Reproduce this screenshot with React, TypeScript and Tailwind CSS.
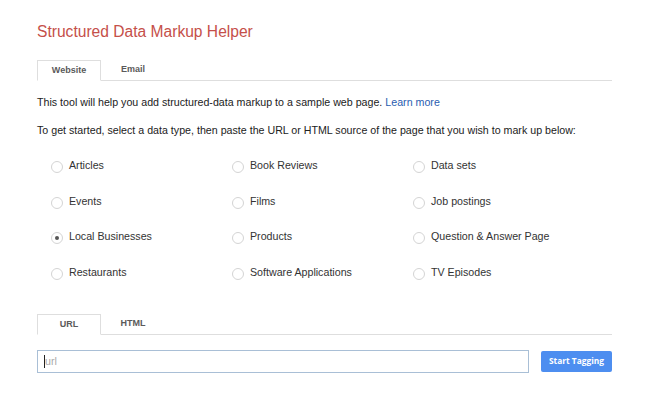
import React from "react";

const types = [
  ["Articles", "Book Reviews", "Data sets"],
  ["Events", "Films", "Job postings"],
  ["Local Businesses", "Products", "Question & Answer Page"],
  ["Restaurants", "Software Applications", "TV Episodes"],
];

function Radio({ checked }: { checked?: boolean }) {
  return (
    <span className="w-[12px] h-[12px] rounded-full border border-[#d4d4d4] bg-white flex items-center justify-center shrink-0 mt-[3px]">
      {checked && <span className="w-[4px] h-[4px] rounded-full bg-[#555]" />}
    </span>
  );
}

function Tabs({ a, b }: { a: string; b: string }) {
  return (
    <div className="flex h-[21px] border-b border-[#dedede] w-[575px]">
      <div className="w-[64px] h-[21px] border border-[#dedede] border-b-white bg-white flex items-center justify-center text-[9px] font-bold text-[#5a5a5a]">
        {a}
      </div>
      <div className="w-[64px] h-[20px] flex items-center justify-center text-[9px] font-bold text-[#5a5a5a]">
        {b}
      </div>
    </div>
  );
}

export default function App() {
  return (
    <div
      className="w-[660px] h-[397px] bg-white pl-[37px] pt-[22px]"
      style={{ fontFamily: '"Liberation Sans", Arial, sans-serif' }}
    >
      <h1 className="text-[15.6px] leading-[20px] text-[#c5504a]">Structured Data Markup Helper</h1>
      <div className="mt-[18px]">
        <Tabs a="Website" b="Email" />
      </div>
      <p className="mt-[14px] text-[10.66px] leading-[14px] text-[#222]">
        This tool will help you add structured-data markup to a sample web page.{" "}
        <span className="text-[#2a5db0]">Learn more</span>
      </p>
      <p className="mt-[14px] text-[10.66px] leading-[14px] text-[#222]">
        To get started, select a data type, then paste the URL or HTML source of the page that you wish to mark up below:
      </p>
      <div className="mt-[21px] pl-[14px] grid grid-cols-[181px_181px_181px]">
        {types.map((row, ri) =>
          row.map((t, ci) => (
            <div key={ri + "-" + ci} className="h-[35.5px] flex items-start gap-[6px]">
              <Radio checked={t === "Local Businesses"} />
              <span className="text-[10.66px] leading-[14px] text-[#333]">{t}</span>
            </div>
          ))
        )}
      </div>
      <div className="mt-[14px]">
        <Tabs a="URL" b="HTML" />
      </div>
      <div className="mt-[15px] flex items-center gap-[12px]">
        <div className="w-[492px] h-[23px] border border-[#a9bfd6] flex items-center pl-[6px]">
          <span className="w-px h-[13px] bg-[#222]" />
          <span className="text-[10.66px] text-[#aaa]">url</span>
        </div>
        <button
          className="w-[71px] h-[21px] bg-[#4d8ef0] rounded-[2px] text-white text-[8.4px] font-bold"
          style={{ fontFamily: '"Open Sans", sans-serif' }}
        >
          Start Tagging
        </button>
      </div>
    </div>
  );
}
